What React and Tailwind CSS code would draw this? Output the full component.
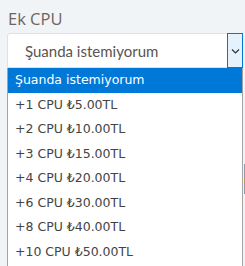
import React from "react";

const options = [
  "+1 CPU ₺5.00TL",
  "+2 CPU ₺10.00TL",
  "+3 CPU ₺15.00TL",
  "+4 CPU ₺20.00TL",
  "+6 CPU ₺30.00TL",
  "+8 CPU ₺40.00TL",
  "+10 CPU ₺50.00TL",
];

export default function App() {
  return (
    <div className="relative w-[245px] h-[266px] overflow-hidden bg-[#f1f4f7]">
      <div className="absolute right-0 top-[164px] w-[1px] h-[30px] bg-[#8c9aa8]" />
      <div className="absolute right-0 top-[178px] w-[1px] h-[5px] bg-[#b59a52]" />
      <div className="pl-[7px] pr-[2px] pt-[6px]">
        <div className="pl-[1px] text-[16.5px] leading-[25px] text-[#6e6460] font-['Open_Sans',sans-serif]">
          Ek CPU
        </div>
        <div className="mt-[2px] h-[35px] flex bg-white border border-[#dde2e8] rounded-tl-[3px]">
          <div className="flex-1 flex items-center pl-[17px] pt-[1px] text-[15px] text-[#5a5350] font-['Lato',sans-serif]">
            Şuanda istemiyorum
          </div>
          <div className="w-[16px] -my-[1px] -mr-[1px] flex items-center justify-center bg-[#e5f1fb] border border-[#0078d7]">
            <svg width="9" height="6" viewBox="0 0 9 6" fill="none">
              <path d="M1 1.5L4.5 5L8 1.5" stroke="#333" strokeWidth="1.2" />
            </svg>
          </div>
        </div>
        <div className="bg-white border-x border-[#a3a3a3] h-[300px] font-['DejaVu_Sans',sans-serif] text-[12.5px]">
          <div className="h-[25px] flex items-center pl-[7px] bg-[#0078d7] text-white">
            Şuanda istemiyorum
          </div>
          {options.map((o) => (
            <div key={o} className="h-[24.5px] flex items-center pl-[7px] text-[#444]">
              {o}
            </div>
          ))}
        </div>
      </div>
    </div>
  );
}
